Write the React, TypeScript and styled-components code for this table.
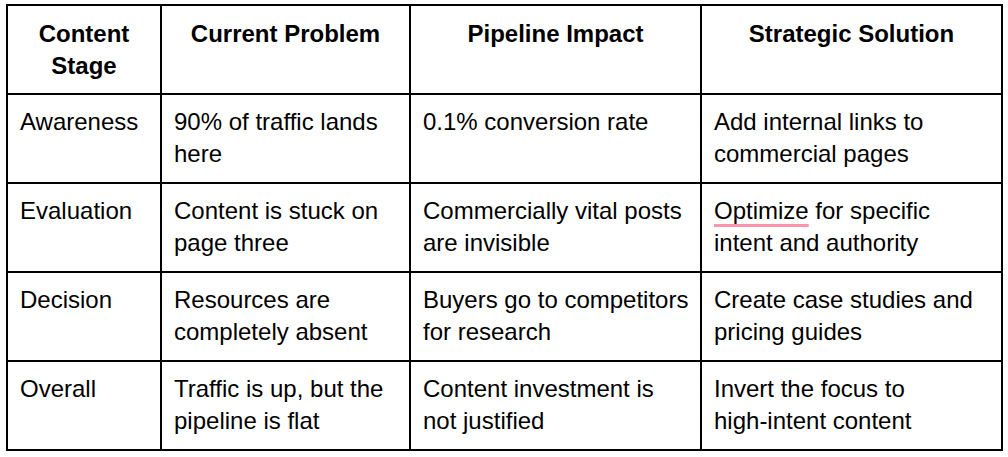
import React from "react";
import styled, { createGlobalStyle } from "styled-components";

const Global = createGlobalStyle`
  html, body {
    margin: 0;
    padding: 0;
    background: #ffffff;
  }
  body {
    font-family: "Liberation Sans", Arial, Helvetica, sans-serif;
    color: #000000;
  }
`;

const Page = styled.div`
  padding: 4px 0 0 6px;
`;

const Table = styled.table`
  border-collapse: separate;
  border-spacing: 0;
  table-layout: fixed;
  width: 997px;
  border-top: 2px solid #000;
  border-left: 2px solid #000;
  font-size: 24px;
  line-height: 32px;
`;

const Col = styled.col<{ $w: number }>`
  width: ${(p) => p.$w}px;
`;

const Th = styled.th`
  border-right: 2px solid #000;
  border-bottom: 2px solid #000;
  padding: 12px 12px 11px 12px;
  height: 64px;
  font-weight: 700;
  text-align: center;
  vertical-align: top;
`;

const Td = styled.td`
  border-right: 2px solid #000;
  border-bottom: 2px solid #000;
  padding: 11px 9px 12px 12px;
  height: 64px;
  font-weight: 400;
  text-align: left;
  vertical-align: top;
`;

const Flagged = styled.span`
  text-decoration-line: underline;
  text-decoration-color: #ff94ae;
  text-decoration-thickness: 3px;
  text-underline-offset: 5px;
`;

const NoBreak = styled.span`
  white-space: nowrap;
`;

const widths = [154, 249, 291, 301];

const headers = ["Content Stage", "Current Problem", "Pipeline Impact", "Strategic Solution"];

const rows: React.ReactNode[][] = [
  ["Awareness", "90% of traffic lands here", "0.1% conversion rate", "Add internal links to commercial pages"],
  [
    "Evaluation",
    "Content is stuck on page three",
    "Commercially vital posts are invisible",
    <>
      <Flagged>Optimize</Flagged> for specific intent and authority
    </>,
  ],
  ["Decision", "Resources are completely absent", "Buyers go to competitors for research", "Create case studies and pricing guides"],
  [
    "Overall",
    "Traffic is up, but the pipeline is flat",
    "Content investment is not justified",
    <>
      Invert the focus to <NoBreak>high-intent</NoBreak> content
    </>,
  ],
];

export default function App() {
  return (
    <>
      <Global />
      <Page>
        <Table>
          <colgroup>
            {widths.map((w, i) => (
              <Col key={i} $w={w} />
            ))}
          </colgroup>
          <thead>
            <tr>
              {headers.map((h) => (
                <Th key={h}>{h === "Content Stage" ? <>Content<br />Stage</> : h}</Th>
              ))}
            </tr>
          </thead>
          <tbody>
            {rows.map((r, i) => (
              <tr key={i}>
                {r.map((c, j) => (
                  <Td key={j}>{c}</Td>
                ))}
              </tr>
            ))}
          </tbody>
        </Table>
      </Page>
    </>
  );
}
